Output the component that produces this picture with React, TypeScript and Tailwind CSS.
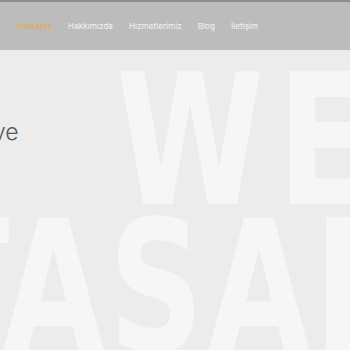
import React from "react";

const links = ["Anasayfa", "Hakkımızda", "Hizmetlerimiz", "Blog", "İletişim"];

export default function App() {
  return (
    <div className="relative w-[350px] h-[350px] overflow-hidden bg-[#ececec] font-['Inter',sans-serif]">
      {/* background lettering */}
      <div className="absolute inset-0 pointer-events-none select-none font-['DejaVu_Sans_Condensed',sans-serif] font-bold text-[#f6f6f6]">
        <div className="absolute left-[116px] top-[50px] origin-left scale-x-[0.82] text-[182px] leading-[182px] whitespace-nowrap tracking-[16px]">
          WEB
        </div>
        <div className="absolute left-[-80px] top-[196px] origin-left scale-x-[0.8] text-[182px] leading-[182px] whitespace-nowrap tracking-[6px]">
          TASARIM
        </div>
      </div>

      <nav className="relative h-[50px] border-t-2 border-[#8d8d8d] bg-[#bcbcbc] flex items-center pl-[16px] gap-[16px] text-[8.2px] text-[#f4f4f4]">
        {links.map((l, i) => (
          <a key={l} className={i === 0 ? "text-[#e2aa4c]" : ""}>
            {l}
          </a>
        ))}
      </nav>

      <div className="relative ml-[-7px] mt-[71px] text-[23px] font-light text-[#5a5a5a] leading-none">
        ve
      </div>
    </div>
  );
}
